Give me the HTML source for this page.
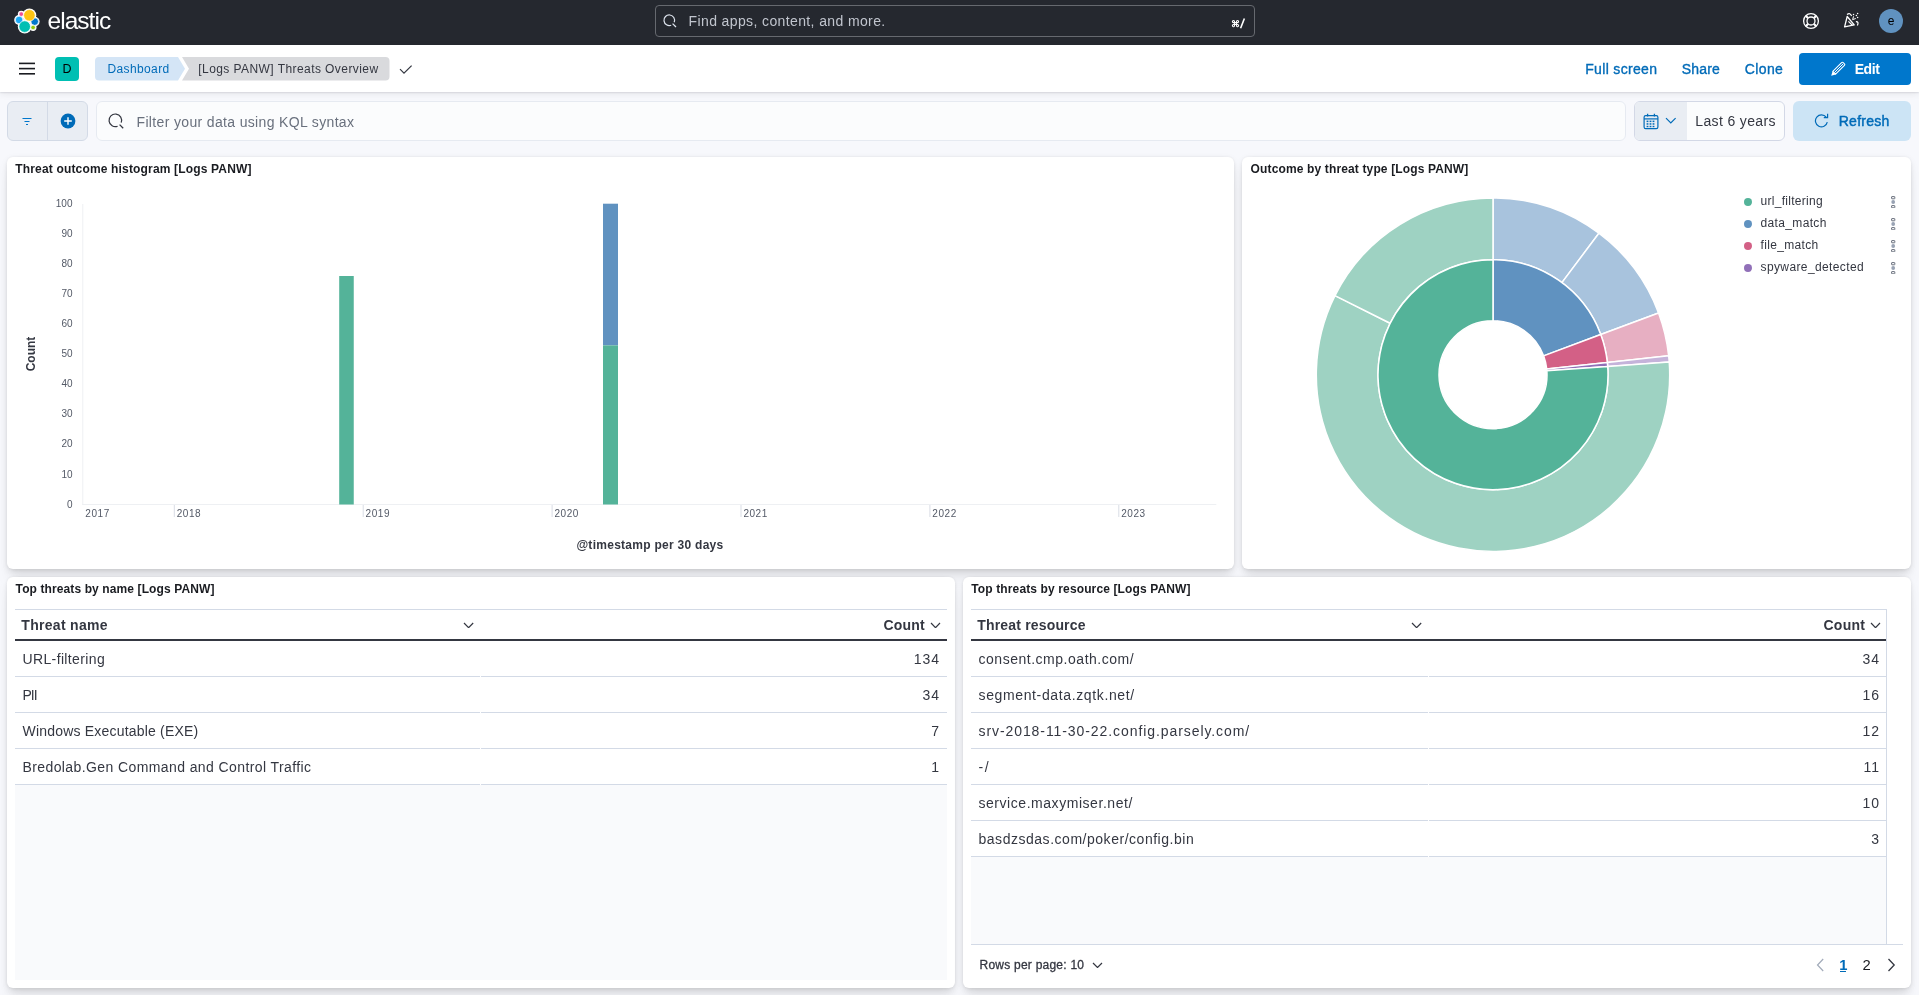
<!DOCTYPE html>
<html><head><meta charset="utf-8"><title>Dashboard</title>
<style>
*{box-sizing:border-box;margin:0;padding:0}
html,body{width:1919px;height:995px;overflow:hidden;background:#f7f8fc;font-family:"Liberation Sans",sans-serif;color:#343741}
.a{position:absolute;white-space:nowrap}
#hdr{position:absolute;left:0;top:0;width:1919px;height:45px;background:#25282f}
#bar2{position:absolute;left:0;top:45px;width:1919px;height:47px;background:#fff;box-shadow:0 1px 1.5px rgba(0,0,30,.10),0 2px 7px rgba(0,0,30,.07)}
.panel{position:absolute;background:#fff;border-radius:6px;box-shadow:0 .9px 4px -1px rgba(0,0,20,.11),0 2.6px 8px -1px rgba(0,0,20,.08),0 5.7px 12px -1px rgba(0,0,20,.065),0 15px 15px -1px rgba(0,0,20,.045)}
.hl{position:absolute;height:1px;background:#d3dae6}
</style></head><body>
<div id="root" style="position:absolute;left:0;top:0;width:1919px;height:995px;will-change:transform"><div id="hdr"></div>
<svg class="a" style="left:14px;top:8px" width="26" height="27" viewBox="0 0 26 27"><circle cx="7.25" cy="6.1" r="3.4" fill="#fff"></circle><circle cx="5.1" cy="12" r="4.9" fill="#fff"></circle><circle cx="20.7" cy="13.6" r="4.9" fill="#fff"></circle><circle cx="15.4" cy="7.3" r="6.9" fill="#fff"></circle><circle cx="10.7" cy="18.6" r="6.9" fill="#fff"></circle><circle cx="19.1" cy="19.5" r="3.4" fill="#fff"></circle><circle cx="7.25" cy="6.1" r="2.3" fill="#f04e98" stroke="#fff" stroke-width="0.7"></circle><circle cx="5.1" cy="12" r="3.8" fill="#1ba9f5" stroke="#fff" stroke-width="0.7"></circle><circle cx="20.7" cy="13.6" r="3.8" fill="#0077cc" stroke="#fff" stroke-width="0.7"></circle><circle cx="15.4" cy="7.3" r="5.8" fill="#fec514" stroke="#fff" stroke-width="0.7"></circle><circle cx="10.7" cy="18.6" r="5.8" fill="#00bfb3" stroke="#fff" stroke-width="0.7"></circle><circle cx="19.1" cy="19.5" r="2.3" fill="#93c90e" stroke="#fff" stroke-width="0.7"></circle></svg>
<div class="a" style="left: 47.5px; top: 8.66px; font-size: 24.5px; line-height: 1; color: rgb(255, 255, 255); letter-spacing: -0.959px;">elastic</div>
<div class="a" style="left:655px;top:5px;width:600px;height:32px;border:1px solid #66696f;border-radius:4px"></div>
<svg class="a" style="left:662px;top:13px" width="16" height="16" viewBox="0 0 16 16"><path d="M12.2 9.2 A5.3 5.3 0 1 0 9.2 12.2" fill="none" stroke="#dfe5ef" stroke-width="1.2"></path><path d="M10.6 10.6 L14 14" stroke="#dfe5ef" stroke-width="1.3"></path></svg>
<div class="a" style="left: 688.6px; top: 13.95px; font-size: 14px; line-height: 1; color: rgb(193, 197, 206); letter-spacing: 0.379px;">Find apps, content, and more.</div>
<svg class="a" style="left:1230px;top:16.5px" width="16" height="12" viewBox="0 0 16 12"><text x="0.8" y="9.6" font-family="Liberation Sans" font-size="9.2" font-weight="700" fill="#fff">⌘</text><path d="M14.4 1.5 L10.6 11.3" stroke="#fff" stroke-width="1.6"></path></svg>
<svg class="a" style="left:1802px;top:12px" width="18" height="18" viewBox="0 0 18 18"><circle cx="9" cy="9" r="7.4" fill="none" stroke="#fff" stroke-width="1.3"></circle><circle cx="9" cy="9" r="4" fill="none" stroke="#fff" stroke-width="1.3"></circle><path d="M3.8 3.8L6.2 6.2M14.2 3.8L11.8 6.2M3.8 14.2L6.2 11.8M14.2 14.2L11.8 11.8" stroke="#fff" stroke-width="2.2"></path></svg>
<svg class="a" style="left:1841px;top:11px" width="20" height="20" viewBox="0 0 20 20"><path d="M3.6 15.9 L6.2 5.5 L13.2 13.9 Z" fill="none" stroke="#fff" stroke-width="1.3" stroke-linejoin="round"></path><path d="M7.4 10.4 L11.4 14.3" stroke="#fff" stroke-width="1.2"></path><path d="M6 3.4 Q9.2 1.2 10.6 5" fill="none" stroke="#fff" stroke-width="1.2"></path><path d="M14.9 10.6 Q18.2 10.4 16.4 14.4" fill="none" stroke="#fff" stroke-width="1.2"></path><path d="M12.6 5.3 L11.6 8.6 L14.8 7.5" fill="none" stroke="#fff" stroke-width="1"></path><circle cx="12.5" cy="3.4" r=".75" fill="#fff"></circle><circle cx="16.6" cy="2.5" r=".75" fill="#fff"></circle><circle cx="15.4" cy="4.4" r=".75" fill="#fff"></circle><circle cx="16.6" cy="6.4" r=".75" fill="#fff"></circle></svg>
<div class="a" style="left:1879px;top:9px;width:24px;height:24px;border-radius:50%;background:#6092c0"></div>
<div class="a" style="left:1887.80px;top:14.74px;font-size:12px;line-height:1;color:#000;">e</div>
<div id="bar2"></div>
<svg class="a" style="left:19px;top:62px" width="16" height="14" viewBox="0 0 16 14"><rect x="0" y="0.6" width="16" height="1.6" fill="#1a1c21"></rect><rect x="0" y="5.8" width="16" height="1.6" fill="#1a1c21"></rect><rect x="0" y="11" width="16" height="1.6" fill="#1a1c21"></rect></svg>
<div class="a" style="left:55px;top:57px;width:24px;height:24px;border-radius:4px;background:#00bfb3"></div>
<div class="a" style="left:62.50px;top:62.82px;font-size:12.5px;line-height:1;color:#000;">D</div>
<svg class="a" style="left:95px;top:57px" width="300" height="24" viewBox="0 0 300 24">
    <path d="M4 0 H83 L90 11.7 L83 23.4 H4 Q0 23.4 0 19.4 V4 Q0 0 4 0 Z" fill="#d4e5f6"></path>
    <path d="M87 0 H290.5 Q294.5 0 294.5 4 V19.4 Q294.5 23.4 290.5 23.4 H87 L94 11.7 Z" fill="#d9dadd"></path>
    </svg>
<div class="a" style="left: 107.5px; top: 62.74px; font-size: 12px; line-height: 1; color: rgb(0, 107, 184); letter-spacing: 0.373px;">Dashboard</div>
<div class="a" style="left: 198.3px; top: 62.74px; font-size: 12px; line-height: 1; color: rgb(52, 55, 65); letter-spacing: 0.427px;">[Logs PANW] Threats Overview</div>
<svg class="a" style="left:399px;top:64px" width="14" height="11" viewBox="0 0 14 11"><path d="M1 5.2 L5 9.2 L12.6 1.6" fill="none" stroke="#343741" stroke-width="1.2"></path></svg>
<div class="a" style="left: 1585.2px; top: 62.05px; font-size: 14px; line-height: 1; color: rgb(0, 107, 184); -webkit-text-stroke: 0.35px rgb(0, 107, 184); letter-spacing: 0.333px;">Full screen</div>
<div class="a" style="left: 1681.7px; top: 62.05px; font-size: 14px; line-height: 1; color: rgb(0, 107, 184); -webkit-text-stroke: 0.35px rgb(0, 107, 184); letter-spacing: 0.21px;">Share</div>
<div class="a" style="left: 1744.7px; top: 62.05px; font-size: 14px; line-height: 1; color: rgb(0, 107, 184); -webkit-text-stroke: 0.35px rgb(0, 107, 184); letter-spacing: 0.402px;">Clone</div>
<div class="a" style="left:1799px;top:53px;width:112px;height:32px;border-radius:4px;background:#0077cc"></div>
<svg class="a" style="left:1830px;top:61px" width="16" height="16" viewBox="0 0 16 16"><path d="M2.8 10.4 L11.6 1.6 Q12.4 0.8 13.2 1.6 L14.4 2.8 Q15.2 3.6 14.4 4.4 L5.6 13.2 Z" fill="none" stroke="#fff" stroke-width="1.1" stroke-linejoin="round"></path><path d="M4.4 11.6 L13 3" stroke="#fff" stroke-width="1"></path><path d="M2.6 10.2 L5.8 13.4 L1.2 14.8 Z" fill="#fff"></path></svg>
<div class="a" style="left: 1854.7px; top: 62.15px; font-size: 14px; line-height: 1; color: rgb(255, 255, 255); font-weight: 700; letter-spacing: -0.418px;">Edit</div>
<div class="a" style="left:7px;top:101px;width:81px;height:40px;border:1px solid #d3dae6;border-radius:6px;background:#e9edf3"></div>
<div class="a" style="left:47px;top:102px;width:1px;height:38px;background:#d3dae6"></div>
<svg class="a" style="left:20px;top:114px" width="14" height="14" viewBox="0 0 14 14"><path d="M2.5 4.5H11.5 M4.5 7.5H9.5 M6 10.5H8" stroke="#0077cc" stroke-width="1.1"></path></svg>
<svg class="a" style="left:59.5px;top:112.5px" width="16" height="16" viewBox="0 0 16 16"><circle cx="8" cy="8" r="7.4" fill="#006bb8"></circle><path d="M8 4.2V11.8M4.2 8H11.8" stroke="#fff" stroke-width="1.4"></path></svg>
<div class="a" style="left:96px;top:101px;width:1530px;height:40px;border:1px solid #e6eaf1;border-radius:6px;background:#fbfcfd"></div>
<svg class="a" style="left:107px;top:112px" width="18" height="18" viewBox="0 0 18 18"><path d="M14.2 10.6 A6.3 6.3 0 1 0 10.6 14.2" fill="none" stroke="#343741" stroke-width="1.2"></path><path d="M12.6 12.6 L16.2 16.2" stroke="#343741" stroke-width="1.3"></path></svg>
<div class="a" style="left: 136.5px; top: 114.85px; font-size: 14px; line-height: 1; color: rgb(105, 112, 125); letter-spacing: 0.345px;">Filter your data using KQL syntax</div>
<div class="a" style="left:1634px;top:101px;width:151px;height:40px;border:1px solid #d3d8e6;border-radius:6px;background:#fbfcfd;overflow:hidden"><div style="position:absolute;left:0;top:0;width:52px;height:38px;background:#e9edf3"></div></div>
<svg class="a" style="left:1643px;top:113px" width="16" height="17" viewBox="0 0 16 17"><rect x="1.1" y="2.6" width="13.8" height="13" rx="1.6" fill="none" stroke="#006bb8" stroke-width="1.2"></rect><path d="M1.1 5.9H14.9" stroke="#006bb8" stroke-width="1.2"></path><path d="M4.6 0.8V3.6M11.4 0.8V3.6" stroke="#006bb8" stroke-width="1.3"></path><g fill="#006bb8"><rect x="3.6" y="7.6" width="1.8" height="1.5"></rect><rect x="6.6" y="7.6" width="1.8" height="1.5"></rect><rect x="9.6" y="7.6" width="1.8" height="1.5"></rect><rect x="3.6" y="10.2" width="1.8" height="1.5"></rect><rect x="6.6" y="10.2" width="1.8" height="1.5"></rect><rect x="9.6" y="10.2" width="1.8" height="1.5"></rect><rect x="3.6" y="12.8" width="1.8" height="1.4"></rect><rect x="6.6" y="12.8" width="1.8" height="1.4"></rect><rect x="9.6" y="12.8" width="1.8" height="1.4"></rect></g></svg>
<svg class="a" style="left:1665px;top:117px" width="12" height="8" viewBox="0 0 12 8"><path d="M1 1.2L5.8 6L10.6 1.2" fill="none" stroke="#006bb8" stroke-width="1.2"></path></svg>
<div class="a" style="left: 1695.3px; top: 114.05px; font-size: 14px; line-height: 1; color: rgb(52, 55, 65); letter-spacing: 0.358px;">Last 6 years</div>
<div class="a" style="left:1793px;top:101px;width:118px;height:40px;border-radius:6px;background:#cce4f5"></div>
<svg class="a" style="left:1814px;top:113px" width="16" height="15" viewBox="0 0 16 15"><path d="M12.2 4.2 A6 6 0 1 0 13.3 9.2" fill="none" stroke="#006bb8" stroke-width="1.2"></path><path d="M13.6 0.8 V4.6 H9.8" fill="none" stroke="#006bb8" stroke-width="1.2"></path></svg>
<div class="a" style="left: 1838.7px; top: 114.05px; font-size: 14px; line-height: 1; color: rgb(0, 107, 184); -webkit-text-stroke: 0.45px rgb(0, 107, 184); letter-spacing: 0.278px;">Refresh</div>
<div class="panel" style="left:7px;top:157px;width:1227px;height:412px"></div>
<div class="panel" style="left:1242px;top:157px;width:669px;height:412px"></div>
<div class="panel" style="left:7px;top:577px;width:948px;height:411px"></div>
<div class="panel" style="left:963px;top:577px;width:948px;height:411px"></div>
<div class="a" style="left: 15.3px; top: 162.64px; font-size: 12px; line-height: 1; color: rgb(26, 28, 33); font-weight: 700; letter-spacing: 0.164px;">Threat outcome histogram [Logs PANW]</div>
<div class="a" style="left: 1250.6px; top: 162.64px; font-size: 12px; line-height: 1; color: rgb(26, 28, 33); font-weight: 700; letter-spacing: 0.139px;">Outcome by threat type [Logs PANW]</div>
<div class="a" style="left: 15.6px; top: 582.64px; font-size: 12px; line-height: 1; color: rgb(26, 28, 33); font-weight: 700; letter-spacing: 0.108px;">Top threats by name [Logs PANW]</div>
<div class="a" style="left: 971.3px; top: 582.64px; font-size: 12px; line-height: 1; color: rgb(26, 28, 33); font-weight: 700; letter-spacing: 0.126px;">Top threats by resource [Logs PANW]</div>
<svg class="a" style="left:0;top:0" width="1240" height="570" viewBox="0 0 1240 570">
<rect x="82.3" y="204" width="1" height="301" fill="#eef0f3"></rect>
<rect x="82.3" y="504" width="1134" height="1" fill="#eef0f3"></rect>
<rect x="173.8" y="505" width="1" height="12" fill="#d9dde5"></rect>
<rect x="362.7" y="505" width="1" height="12" fill="#d9dde5"></rect>
<rect x="551.6" y="505" width="1" height="12" fill="#d9dde5"></rect>
<rect x="740.5" y="505" width="1" height="12" fill="#d9dde5"></rect>
<rect x="929.4" y="505" width="1" height="12" fill="#d9dde5"></rect>
<rect x="1118.3" y="505" width="1" height="12" fill="#d9dde5"></rect>
<rect x="339.2" y="276" width="14.55" height="228.5" fill="#54b399"></rect>
<rect x="603" y="203.7" width="15" height="141.7" fill="#6092c0"></rect>
<rect x="603" y="345.4" width="15" height="159.1" fill="#54b399"></rect>
</svg>
<div class="a" style="right:1846.50px;top:499.64px;font-size:10px;line-height:1;color:#535966;">0</div>
<div class="a" style="right:1846.50px;top:469.54px;font-size:10px;line-height:1;color:#535966;">10</div>
<div class="a" style="right:1846.50px;top:439.44px;font-size:10px;line-height:1;color:#535966;">20</div>
<div class="a" style="right:1846.50px;top:409.34px;font-size:10px;line-height:1;color:#535966;">30</div>
<div class="a" style="right:1846.50px;top:379.24px;font-size:10px;line-height:1;color:#535966;">40</div>
<div class="a" style="right:1846.50px;top:349.14px;font-size:10px;line-height:1;color:#535966;">50</div>
<div class="a" style="right:1846.50px;top:319.04px;font-size:10px;line-height:1;color:#535966;">60</div>
<div class="a" style="right:1846.50px;top:288.94px;font-size:10px;line-height:1;color:#535966;">70</div>
<div class="a" style="right:1846.50px;top:258.84px;font-size:10px;line-height:1;color:#535966;">80</div>
<div class="a" style="right:1846.50px;top:228.74px;font-size:10px;line-height:1;color:#535966;">90</div>
<div class="a" style="right:1846.50px;top:198.63px;font-size:10px;line-height:1;color:#535966;">100</div>
<div class="a" style="left: 85.3px; top: 509.04px; font-size: 10px; line-height: 1; color: rgb(83, 89, 102); letter-spacing: 0.55px;">2017</div>
<div class="a" style="left: 176.7px; top: 509.04px; font-size: 10px; line-height: 1; color: rgb(83, 89, 102); letter-spacing: 0.55px;">2018</div>
<div class="a" style="left: 365.6px; top: 509.04px; font-size: 10px; line-height: 1; color: rgb(83, 89, 102); letter-spacing: 0.55px;">2019</div>
<div class="a" style="left: 554.5px; top: 509.04px; font-size: 10px; line-height: 1; color: rgb(83, 89, 102); letter-spacing: 0.55px;">2020</div>
<div class="a" style="left: 743.4px; top: 509.04px; font-size: 10px; line-height: 1; color: rgb(83, 89, 102); letter-spacing: 0.55px;">2021</div>
<div class="a" style="left: 932.3px; top: 509.04px; font-size: 10px; line-height: 1; color: rgb(83, 89, 102); letter-spacing: 0.55px;">2022</div>
<div class="a" style="left: 1121.2px; top: 509.04px; font-size: 10px; line-height: 1; color: rgb(83, 89, 102); letter-spacing: 0.55px;">2023</div>
<div class="a" style="left: 576.4px; top: 539.14px; font-size: 12px; line-height: 1; color: rgb(52, 55, 65); font-weight: 700; letter-spacing: 0.272px;">@timestamp per 30 days</div>
<div class="a" style="left:13.2px;top:347.3px;width:35px;height:14px;transform:rotate(-90deg);font-size:12px;line-height:14px;font-weight:700;color:#343741;text-align:center">Count</div>
<svg class="a" style="left:1242px;top:157px" width="669" height="412" viewBox="1242 157 669 412">
<g stroke="#fff" stroke-width="1.5" stroke-linejoin="round">
<path d="M1493.00 198.00 A176.7 176.7 0 0 1 1598.89 233.24 L1561.92 282.64 A115 115 0 0 0 1493.00 259.70 Z" fill="#a8c3dd"></path>
<path d="M1598.89 233.24 A176.7 176.7 0 0 1 1658.56 312.95 L1600.75 334.51 A115 115 0 0 0 1561.92 282.64 Z" fill="#a8c3dd"></path>
<path d="M1658.56 312.95 A176.7 176.7 0 0 1 1668.69 355.81 L1607.34 362.41 A115 115 0 0 0 1600.75 334.51 Z" fill="#e7afc2"></path>
<path d="M1668.69 355.81 A176.7 176.7 0 0 1 1669.25 362.09 L1607.71 366.50 A115 115 0 0 0 1607.34 362.41 Z" fill="#c5b3da"></path>
<path d="M1669.25 362.09 A176.7 176.7 0 1 1 1334.99 295.61 L1390.16 323.22 A115 115 0 1 0 1607.71 366.50 Z" fill="#9ed2c2"></path>
<path d="M1334.99 295.61 A176.7 176.7 0 0 1 1493.00 198.00 L1493.00 259.70 A115 115 0 0 0 1390.16 323.22 Z" fill="#9ed2c2"></path>
<path d="M1493.00 259.70 A115 115 0 0 1 1600.75 334.51 L1543.60 355.83 A54 54 0 0 0 1493.00 320.70 Z" fill="#6092c0"></path>
<path d="M1600.75 334.51 A115 115 0 0 1 1607.34 362.41 L1546.69 368.93 A54 54 0 0 0 1543.60 355.83 Z" fill="#d36086"></path>
<path d="M1607.34 362.41 A115 115 0 0 1 1607.71 366.50 L1546.86 370.85 A54 54 0 0 0 1546.69 368.93 Z" fill="#9170b8"></path>
<path d="M1607.71 366.50 A115 115 0 1 1 1493.00 259.70 L1493.00 320.70 A54 54 0 1 0 1546.86 370.85 Z" fill="#54b399"></path>
</g></svg>
<div class="a" style="left:1743.8px;top:197.85px;width:8.3px;height:8.3px;border-radius:50%;background:#54b399"></div>
<div class="a" style="left: 1760.5px; top: 195.24px; font-size: 12px; line-height: 1; color: rgb(52, 55, 65); letter-spacing: 0.291px;">url_filtering</div>
<svg class="a" style="left:1891px;top:196.0px" width="5" height="12" viewBox="0 0 5 12"><rect x="0.6" y="0.6" width="3.2" height="2.2" rx=".3" fill="none" stroke="#69707d" stroke-width="1"></rect><circle cx="2.2" cy="6" r="1.9" fill="#98a2b3"></circle><rect x="0.6" y="9.6" width="3.2" height="2.2" rx=".3" fill="none" stroke="#69707d" stroke-width="1"></rect></svg>
<div class="a" style="left:1743.8px;top:219.85px;width:8.3px;height:8.3px;border-radius:50%;background:#6092c0"></div>
<div class="a" style="left: 1760.5px; top: 217.24px; font-size: 12px; line-height: 1; color: rgb(52, 55, 65); letter-spacing: 0.353px;">data_match</div>
<svg class="a" style="left:1891px;top:218.0px" width="5" height="12" viewBox="0 0 5 12"><rect x="0.6" y="0.6" width="3.2" height="2.2" rx=".3" fill="none" stroke="#69707d" stroke-width="1"></rect><circle cx="2.2" cy="6" r="1.9" fill="#98a2b3"></circle><rect x="0.6" y="9.6" width="3.2" height="2.2" rx=".3" fill="none" stroke="#69707d" stroke-width="1"></rect></svg>
<div class="a" style="left:1743.8px;top:241.85px;width:8.3px;height:8.3px;border-radius:50%;background:#d36086"></div>
<div class="a" style="left: 1760.5px; top: 239.24px; font-size: 12px; line-height: 1; color: rgb(52, 55, 65); letter-spacing: 0.333px;">file_match</div>
<svg class="a" style="left:1891px;top:240.0px" width="5" height="12" viewBox="0 0 5 12"><rect x="0.6" y="0.6" width="3.2" height="2.2" rx=".3" fill="none" stroke="#69707d" stroke-width="1"></rect><circle cx="2.2" cy="6" r="1.9" fill="#98a2b3"></circle><rect x="0.6" y="9.6" width="3.2" height="2.2" rx=".3" fill="none" stroke="#69707d" stroke-width="1"></rect></svg>
<div class="a" style="left:1743.8px;top:263.85px;width:8.3px;height:8.3px;border-radius:50%;background:#9170b8"></div>
<div class="a" style="left: 1760.5px; top: 261.24px; font-size: 12px; line-height: 1; color: rgb(52, 55, 65); letter-spacing: 0.386px;">spyware_detected</div>
<svg class="a" style="left:1891px;top:262.0px" width="5" height="12" viewBox="0 0 5 12"><rect x="0.6" y="0.6" width="3.2" height="2.2" rx=".3" fill="none" stroke="#69707d" stroke-width="1"></rect><circle cx="2.2" cy="6" r="1.9" fill="#98a2b3"></circle><rect x="0.6" y="9.6" width="3.2" height="2.2" rx=".3" fill="none" stroke="#69707d" stroke-width="1"></rect></svg>
<div class="hl" style="left:15px;top:609px;width:932px"></div>
<div class="a" style="left: 21.3px; top: 617.95px; font-size: 14px; line-height: 1; color: rgb(52, 55, 65); font-weight: 700; letter-spacing: 0.295px;">Threat name</div>
<svg class="a" style="left:463.4px;top:621.6px" width="11.2" height="6.7" viewBox="-1 -1 11.2 6.7"><path d="M0 0 L4.60 4.70 L9.20 0" fill="none" stroke="#343741" stroke-width="1.2"></path></svg>
<div class="a" style="left: 883.4px; top: 617.95px; font-size: 14px; line-height: 1; color: rgb(52, 55, 65); font-weight: 700; letter-spacing: 0.241px;">Count</div>
<svg class="a" style="left:930.0px;top:621.6px" width="11.0" height="6.7" viewBox="-1 -1 11.0 6.7"><path d="M0 0 L4.50 4.70 L9.00 0" fill="none" stroke="#343741" stroke-width="1.2"></path></svg>
<div class="a" style="left:15px;top:639px;width:932px;height:2px;background:#343741"></div>
<div class="a" style="left: 22.5px; top: 651.85px; font-size: 14px; line-height: 1; color: rgb(52, 55, 65); letter-spacing: 0.366px;">URL-filtering</div>
<div class="a" style="right:980.00px;top:651.85px;font-size:14px;line-height:1;color:#343741;letter-spacing:1px;margin-right:-1px">134</div>
<div class="hl" style="left:15px;top:676px;width:465px"></div>
<div class="hl" style="left:481px;top:676px;width:466px"></div>
<div class="a" style="left: 22.5px; top: 687.85px; font-size: 14px; line-height: 1; color: rgb(52, 55, 65); letter-spacing: -0.963px;">PII</div>
<div class="a" style="right:980.00px;top:687.85px;font-size:14px;line-height:1;color:#343741;letter-spacing:1px;margin-right:-1px">34</div>
<div class="hl" style="left:15px;top:712px;width:465px"></div>
<div class="hl" style="left:481px;top:712px;width:466px"></div>
<div class="a" style="left: 22.5px; top: 723.85px; font-size: 14px; line-height: 1; color: rgb(52, 55, 65); letter-spacing: 0.196px;">Windows Executable (EXE)</div>
<div class="a" style="right:980.00px;top:723.85px;font-size:14px;line-height:1;color:#343741;letter-spacing:1px;margin-right:-1px">7</div>
<div class="hl" style="left:15px;top:748px;width:465px"></div>
<div class="hl" style="left:481px;top:748px;width:466px"></div>
<div class="a" style="left: 22.5px; top: 759.85px; font-size: 14px; line-height: 1; color: rgb(52, 55, 65); letter-spacing: 0.4px;">Bredolab.Gen Command and Control Traffic</div>
<div class="a" style="right:980.00px;top:759.85px;font-size:14px;line-height:1;color:#343741;letter-spacing:1px;margin-right:-1px">1</div>
<div class="hl" style="left:15px;top:784px;width:465px"></div>
<div class="hl" style="left:481px;top:784px;width:466px"></div>
<div class="a" style="left:15px;top:785px;width:932px;height:195px;background:#f9fafc"></div>
<div class="hl" style="left:971px;top:609px;width:915px"></div>
<div class="a" style="left: 977.3px; top: 617.95px; font-size: 14px; line-height: 1; color: rgb(52, 55, 65); font-weight: 700; letter-spacing: 0.169px;">Threat resource</div>
<svg class="a" style="left:1411.4px;top:621.6px" width="11.2" height="6.7" viewBox="-1 -1 11.2 6.7"><path d="M0 0 L4.60 4.70 L9.20 0" fill="none" stroke="#343741" stroke-width="1.2"></path></svg>
<div class="a" style="left: 1823.5px; top: 617.95px; font-size: 14px; line-height: 1; color: rgb(52, 55, 65); font-weight: 700; letter-spacing: 0.241px;">Count</div>
<svg class="a" style="left:1870.0px;top:621.6px" width="11.0" height="6.7" viewBox="-1 -1 11.0 6.7"><path d="M0 0 L4.50 4.70 L9.00 0" fill="none" stroke="#343741" stroke-width="1.2"></path></svg>
<div class="a" style="left:971px;top:639px;width:915px;height:2px;background:#343741"></div>
<div class="a" style="left: 978.5px; top: 651.85px; font-size: 14px; line-height: 1; color: rgb(52, 55, 65); letter-spacing: 0.522px;">consent.cmp.oath.com/</div>
<div class="a" style="right:40.00px;top:651.85px;font-size:14px;line-height:1;color:#343741;letter-spacing:1px;margin-right:-1px">34</div>
<div class="hl" style="left:971px;top:676px;width:457px"></div>
<div class="hl" style="left:1429px;top:676px;width:457px"></div>
<div class="a" style="left: 978.5px; top: 687.85px; font-size: 14px; line-height: 1; color: rgb(52, 55, 65); letter-spacing: 0.632px;">segment-data.zqtk.net/</div>
<div class="a" style="right:40.00px;top:687.85px;font-size:14px;line-height:1;color:#343741;letter-spacing:1px;margin-right:-1px">16</div>
<div class="hl" style="left:971px;top:712px;width:457px"></div>
<div class="hl" style="left:1429px;top:712px;width:457px"></div>
<div class="a" style="left: 978.5px; top: 723.85px; font-size: 14px; line-height: 1; color: rgb(52, 55, 65); letter-spacing: 0.92px;">srv-2018-11-30-22.config.parsely.com/</div>
<div class="a" style="right:40.00px;top:723.85px;font-size:14px;line-height:1;color:#343741;letter-spacing:1px;margin-right:-1px">12</div>
<div class="hl" style="left:971px;top:748px;width:457px"></div>
<div class="hl" style="left:1429px;top:748px;width:457px"></div>
<div class="a" style="left: 978.5px; top: 759.85px; font-size: 14px; line-height: 1; color: rgb(52, 55, 65); letter-spacing: 1.637px;">-/</div>
<div class="a" style="right:40.00px;top:759.85px;font-size:14px;line-height:1;color:#343741;letter-spacing:1px;margin-right:-1px">11</div>
<div class="hl" style="left:971px;top:784px;width:457px"></div>
<div class="hl" style="left:1429px;top:784px;width:457px"></div>
<div class="a" style="left: 978.5px; top: 795.85px; font-size: 14px; line-height: 1; color: rgb(52, 55, 65); letter-spacing: 0.544px;">service.maxymiser.net/</div>
<div class="a" style="right:40.00px;top:795.85px;font-size:14px;line-height:1;color:#343741;letter-spacing:1px;margin-right:-1px">10</div>
<div class="hl" style="left:971px;top:820px;width:457px"></div>
<div class="hl" style="left:1429px;top:820px;width:457px"></div>
<div class="a" style="left: 978.5px; top: 831.85px; font-size: 14px; line-height: 1; color: rgb(52, 55, 65); letter-spacing: 0.524px;">basdzsdas.com/poker/config.bin</div>
<div class="a" style="right:40.00px;top:831.85px;font-size:14px;line-height:1;color:#343741;letter-spacing:1px;margin-right:-1px">3</div>
<div class="hl" style="left:971px;top:856px;width:457px"></div>
<div class="hl" style="left:1429px;top:856px;width:457px"></div>
<div class="a" style="left:971px;top:857px;width:915px;height:87px;background:#f9fafc"></div>
<div class="a" style="left:1886px;top:609px;width:1px;height:336px;background:#d3dae6"></div>
<div class="hl" style="left:971px;top:944px;width:932px"></div>
<div class="a" style="left: 979.5px; top: 958.84px; font-size: 12px; line-height: 1; color: rgb(52, 55, 65); -webkit-text-stroke: 0.3px rgb(52, 55, 65); letter-spacing: 0.235px;">Rows per page: 10</div>
<svg class="a" style="left:1092.4px;top:961.5px" width="11.0" height="6.5" viewBox="-1 -1 11.0 6.5"><path d="M0 0 L4.50 4.50 L9.00 0" fill="none" stroke="#343741" stroke-width="1.2"></path></svg>
<svg class="a" style="left:1816px;top:958px" width="9" height="14" viewBox="0 0 9 14"><path d="M7.2 1 L1.5 7 L7.2 13" fill="none" stroke="#a2abba" stroke-width="1.2"></path></svg>
<div class="a" style="left:1839.20px;top:957.57px;font-size:14.8px;line-height:1;color:#006bb8;font-weight:700;">1</div>
<div class="a" style="left:1839.8px;top:971px;width:6px;height:1.2px;background:#006bb8"></div>
<div class="a" style="left:1862.60px;top:957.57px;font-size:14.8px;line-height:1;color:#1a1c21;">2</div>
<svg class="a" style="left:1886.5px;top:958px" width="9" height="14" viewBox="0 0 9 14"><path d="M1.5 1 L7.2 7 L1.5 13" fill="none" stroke="#343741" stroke-width="1.3"></path></svg></div>

</body></html>
